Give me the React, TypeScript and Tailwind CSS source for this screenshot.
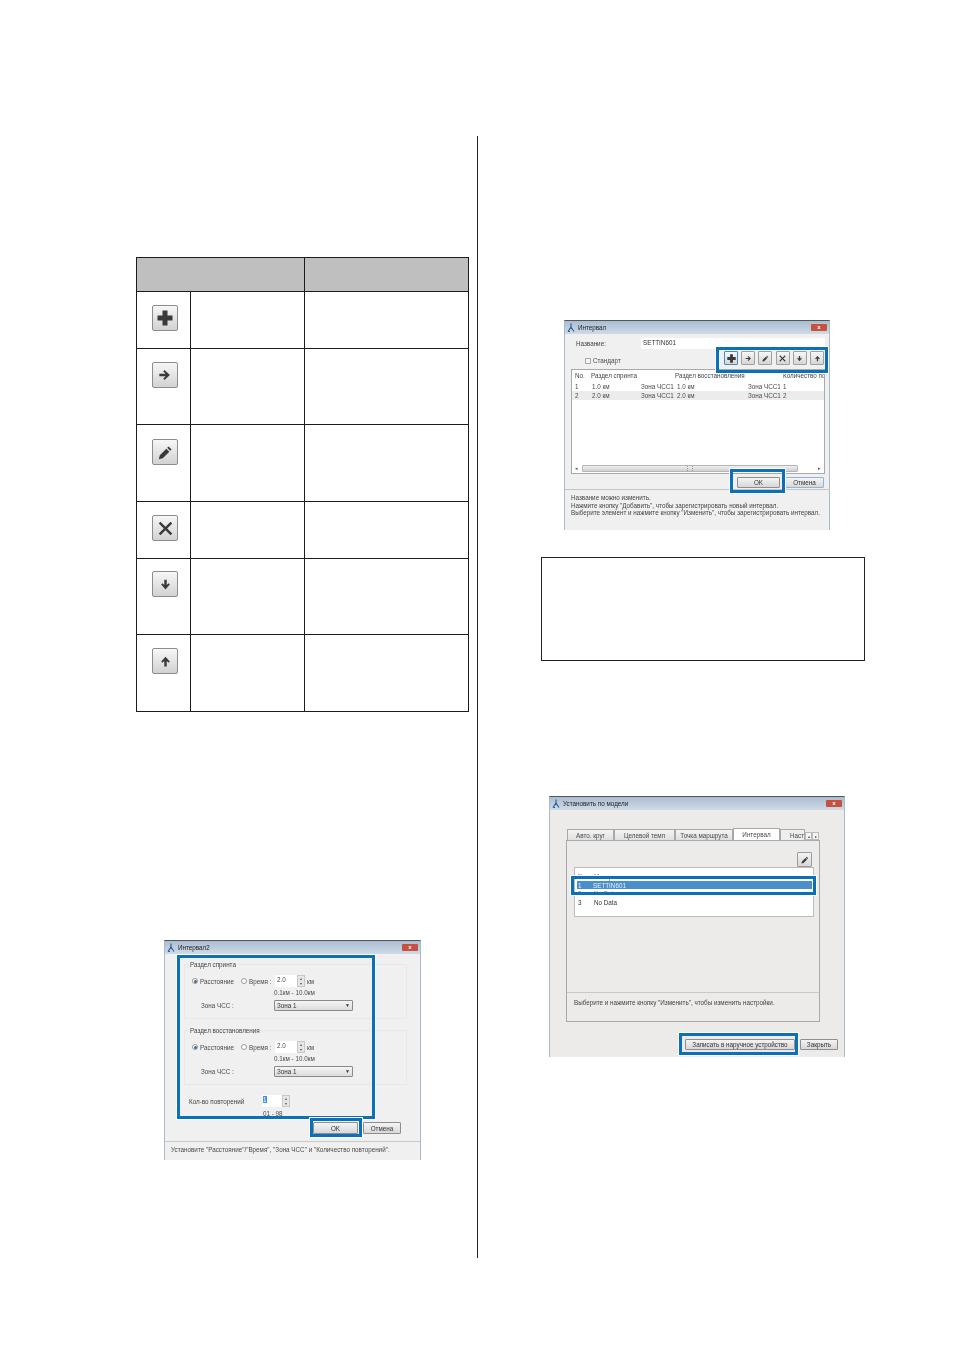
import React from 'react';

const cellLine = 'border-[#1c1c1c]';

type IconKind = 'plus' | 'right' | 'pencil' | 'x' | 'down' | 'up';

const ToolGlyph = ({ kind, size }: { kind: IconKind; size: number }) => (
  <svg width={size} height={size} viewBox="0 0 16 16" fill="#3a3a3a" stroke="none">
    {kind === 'plus' && <path d="M5.5 0.5h5v5h5v5h-5v5h-5v-5h-5v-5h5z" />}
    {kind === 'right' && <path d="M1.5 6.6h7.2L6 3.9l1.4-1.5L13.6 8l-6.2 5.6L6 12.1l2.7-2.7H1.5z" />}
    {kind === 'pencil' && <path d="M11.3 1.5l3.2 3.2-1.5 1.5-3.2-3.2zM8.9 3.9l3.2 3.2-7 7-4.2 1 1-4.2z" />}
    {kind === 'x' && <path d="M2.6 0.8L8 6.2l5.4-5.4 1.8 1.8L9.8 8l5.4 5.4-1.8 1.8L8 9.8l-5.4 5.4-1.8-1.8L6.2 8 .8 2.6z" />}
    {kind === 'down' && <path d="M6.5 2h3v6.6l2.2-2.2 1.6 1.6L8 14 2.7 8l1.6-1.6 2.2 2.2z" />}
    {kind === 'up' && <path d="M6.5 14h3V7.4l2.2 2.2 1.6-1.6L8 2 2.7 8l1.6 1.6 2.2-2.2z" />}
  </svg>
);

const rows: { kind: IconKind; h: string; pt: string; glyph: number }[] = [
  { kind: 'plus', h: 'h-[57px]', pt: 'pt-[13px]', glyph: 16 },
  { kind: 'right', h: 'h-[76px]', pt: 'pt-[13px]', glyph: 14 },
  { kind: 'pencil', h: 'h-[77px]', pt: 'pt-[14px]', glyph: 15 },
  { kind: 'x', h: 'h-[57px]', pt: 'pt-[13px]', glyph: 15 },
  { kind: 'down', h: 'h-[76px]', pt: 'pt-[12px]', glyph: 13 },
  { kind: 'up', h: 'h-[76px]', pt: 'pt-[13px]', glyph: 13 },
];

const IconTable = () => (
  <div className={`w-[333px] border-l border-r border-b ${cellLine}`}>
    <div className={`flex h-[35px] border-t border-b ${cellLine} bg-[#bfbfbf]`}>
      <div className={`w-[168px] border-r ${cellLine}`} />
    </div>
    {rows.map((r, i) => (
      <div key={r.kind} className={`flex ${r.h} ${i < rows.length - 1 ? `border-b ${cellLine}` : ''}`}>
        <div className={`w-[54px] border-r ${cellLine} ${r.pt} pl-[15px]`}>
          <div className="w-[26px] h-[26px] flex items-center justify-center rounded-[2px] border border-[#8d8d8d] bg-gradient-to-b from-[#f7f7f7] to-[#d2d2d2]">
            <ToolGlyph kind={r.kind} size={r.glyph} />
          </div>
        </div>
        <div className={`w-[114px] border-r ${cellLine}`} />
      </div>
    ))}
  </div>
);

const Win = ({ title, className, children }: { title: string; className: string; children: React.ReactNode }) => (
  <div className={`relative flex flex-col overflow-hidden border-t border-[#555] border-x border-x-[#a8bacb] font-['Liberation_Sans',sans-serif] text-[6.3px] leading-[9px] whitespace-nowrap text-[#4a4a4a] blur-[0.4px] ${className}`}>
    <div className="flex items-center h-[13px] shrink-0 pl-[2px] pr-[2px] bg-gradient-to-b from-[#a9bdd2] to-[#cfdbe6]">
      <svg width="8" height="9" viewBox="0 0 8 9" fill="none" stroke="#2f5f9e" strokeWidth="1.2">
        <path d="M4 0.5V4L1 8.5M4 4l3 4.5M1 8.5h2" />
      </svg>
      <span className="ml-[3px] text-[#222]">{title}</span>
      <div className="ml-auto w-[16px] h-[7px] rounded-[1px] bg-[#c8503f] flex items-center justify-center text-white text-[6px] leading-[7px] font-bold">x</div>
    </div>
    {children}
  </div>
);

// синяя рамка поверх окна
const Highlight = ({ className }: { className: string }) => (
  <div className={`absolute border-[3px] border-[#0b70b5] ring-1 ring-white ${className}`} />
);

const Radio = ({ on }: { on?: boolean }) => (
  <span className="flex items-center justify-center w-[6px] h-[6px] rounded-full border border-[#9a9a9a] bg-white shrink-0">
    {on && <span className="w-[3px] h-[3px] rounded-full bg-[#3f6d99]" />}
  </span>
);

const Spinner = () => (
  <div className="flex flex-col w-[8px] h-[12px] border border-[#c8c8c8] bg-[#e6e6e6] text-[4px] leading-[5px] text-center text-[#555]">
    <span className="flex-1">▴</span>
    <span className="flex-1">▾</span>
  </div>
);

const Btn = ({ label, className }: { label: string; className: string }) => (
  <div className={`flex items-center justify-center rounded-[1px] border border-[#8f8f8f] bg-gradient-to-b from-[#f4f4f4] to-[#d8d8d8] ${className}`}>{label}</div>
);

const SprintGroup = ({ title, className }: { title: string; className: string }) => (
  <div className={`ml-[19px] w-[223px] h-[55px] border border-[#e8e8e8] pl-[7px] ${className}`}>
    <div className="-mt-[5px] -ml-[3px] h-[9px] w-fit px-[1px] bg-[#f0f0f0] text-[#444]">{title}</div>
    <div className="flex items-center h-[12px] mt-[6px]">
      <Radio on />
      <span className="ml-[2px] w-[41px]">Расстояние</span>
      <Radio />
      <span className="ml-[2px] w-[26px]">Время :</span>
      <div className="w-[22px] h-[12px] bg-white pl-[2px] leading-[10px]">2.0</div>
      <Spinner />
      <span className="ml-[2px]">км</span>
    </div>
    <div className="ml-[82px] mt-[1px]">0.1км - 10.0км</div>
    <div className="flex items-center mt-[3px]">
      <span className="ml-[9px] w-[73px]">Зона ЧСС :</span>
      <div className="flex items-center justify-between w-[79px] h-[11px] px-[2px] border border-[#8a8a8a] rounded-[1px] bg-gradient-to-b from-[#f5f5f5] to-[#dcdcdc] text-[#333]">
        <span>Зона 1</span>
        <span className="text-[5px]">▼</span>
      </div>
    </div>
  </div>
);

const RepeatDialog = () => (
  <Win title="Интервал2" className="ml-[28px] mt-[228px] w-[257px] h-[220px] bg-[#f0f0f0]">
    <SprintGroup title="Раздел спринта" className="mt-[10px]" />
    <SprintGroup title="Раздел восстановления" className="mt-[11px]" />
    <div className="flex items-center h-[12px] mt-[10px] ml-[24px]">
      <span className="w-[73px] text-[#444]">Кол-во повторений</span>
      <div className="w-[20px] h-[12px] bg-white pl-[1px]">
        <span className="bg-[#3d8fd9] text-white">1</span>
      </div>
      <Spinner />
    </div>
    <div className="ml-[98px] mt-[2px]">01 - 98</div>
    <div className="flex mt-[4px] ml-[148px] gap-[5px] text-[#333]">
      <Btn label="OK" className="w-[45px] h-[12px] border-[#5f9fd0]" />
      <Btn label="Отмена" className="w-[38px] h-[12px]" />
    </div>
    <div className="mt-[7px] flex-1 border-t border-[#c9c9c9] pl-[6px] pt-[3px] bg-[#f0f0f0]">
      Установите "Расстояние"/"Время", "Зона ЧСС" и "Количество повторений".
    </div>
    <Highlight className="left-[12px] top-[14px] w-[198px] h-[164px]" />
    <Highlight className="left-[145px] top-[177px] w-[52px] h-[19px]" />
  </Win>
);

const toolKinds: IconKind[] = ['plus', 'right', 'pencil', 'x', 'down', 'up'];

const intervalRows = [
  { no: '1', a: '1.0 км', b: 'Зона ЧСС1', c: '1.0 км', d: 'Зона ЧСС1', e: '1', bg: '' },
  { no: '2', a: '2.0 км', b: 'Зона ЧСС1', c: '2.0 км', d: 'Зона ЧСС1', e: '2', bg: 'bg-[#ececec]' },
];

const IntervalDialog = () => (
  <Win title="Интервал" className="ml-[86px] mt-[184px] w-[266px] h-[210px] bg-[#f0f0f0]">
    <div className="flex items-center h-[11px] mt-[4px] pl-[11px]">
      <span className="w-[65px] text-[#444]">Название:</span>
      <div className="w-[184px] h-[11px] bg-white pl-[2px] text-[#333]">SETTIN601</div>
    </div>
    <div className="flex h-[20px]">
      <div className="flex items-center h-[11px] mt-[6px] ml-[20px]">
        <span className="w-[6px] h-[6px] border border-[#aaa] bg-[#f4f4f4]" />
        <span className="ml-[2px]">Стандарт</span>
      </div>
      <div className="flex ml-auto mr-[5px] mt-[2px] gap-[3.2px]">
        {toolKinds.map((k, i) => (
          <div key={k} className={`flex items-center justify-center w-[14px] h-[14px] rounded-[1px] border bg-gradient-to-b from-[#f7f7f7] to-[#d6d6d6] ${i === 0 ? 'border-[#3f8ccb]' : 'border-[#a0a0a0]'}`}>
            <ToolGlyph kind={k} size={i === 0 ? 9 : 7} />
          </div>
        ))}
      </div>
    </div>
    <div className="flex flex-col ml-[6px] w-[254px] h-[105px] overflow-hidden border border-[#a9a9a9] bg-white">
      <div className="flex items-center h-[11px] pl-[3px] text-[#444]">
        <span className="w-[16px] shrink-0">No.</span>
        <span className="w-[84px] shrink-0">Раздел спринта</span>
        <span className="w-[108px] shrink-0">Раздел восстановления</span>
        <span className="shrink-0">Количество повторений</span>
      </div>
      <div className="mt-[1px]">
        {intervalRows.map((r) => (
          <div key={r.no} className={`flex items-center h-[9px] pl-[3px] ${r.bg}`}>
            <span className="w-[17px]">{r.no}</span>
            <span className="w-[49px]">{r.a}</span>
            <span className="w-[36px]">{r.b}</span>
            <span className="w-[71px]">{r.c}</span>
            <span className="w-[35px]">{r.d}</span>
            <span>{r.e}</span>
          </div>
        ))}
      </div>
      <div className="mt-auto flex items-center h-[8px] px-[3px] mb-[1px] text-[5px] text-[#555]">
        <span>◂</span>
        <div className="ml-[4px] w-[216px] h-[7px] rounded-[1px] border border-[#b5b5b5] bg-gradient-to-b from-[#f0f0f0] to-[#d0d0d0] text-center leading-[5px]">⋮⋮</div>
        <span className="ml-auto">▸</span>
      </div>
    </div>
    <div className="flex justify-end gap-[5px] mt-[3px] mr-[5px] text-[#333]">
      <Btn label="OK" className="w-[43px] h-[11px]" />
      <Btn label="Отмена" className="w-[39px] h-[11px] border-[#8fb6d6]" />
    </div>
    <div className="mt-[1px] flex-1 border-t border-[#c4c4c4] pl-[6px] pt-[4px] leading-[7.5px] text-[#444]">
      <div>Название можно изменить.</div>
      <div>Нажмите кнопку "Добавить", чтобы зарегистрировать новый интервал.</div>
      <div>Выберите элемент и нажмите кнопку "Изменить", чтобы зарегистрировать интервал.</div>
    </div>
    <Highlight className="left-[151px] top-[26px] w-[112px] h-[26px]" />
    <Highlight className="left-[165px] top-[148px] w-[55px] h-[24px]" />
  </Win>
);

const tabs = [
  { label: 'Авто. круг', w: 'w-[47px]', active: false },
  { label: 'Целевой темп', w: 'w-[61px]', active: false },
  { label: 'Точка маршрута', w: 'w-[58px]', active: false },
  { label: 'Интервал', w: 'w-[47px]', active: true },
];

const DeviceDialog = () => (
  <Win title="Установить по модели" className="ml-[71px] mt-[135px] w-[296px] h-[261px] bg-[#ecebe9]">
    <div className="flex items-end ml-[17px] mt-[19px] h-[11px]">
      {tabs.map((t) => (
        <div key={t.label} className={`flex items-center justify-center ${t.w} border border-b-0 border-[#a9a9a9] ${t.active ? 'h-[12px] bg-white' : 'h-[11px] bg-gradient-to-b from-[#f4f4f4] to-[#e0e0e0]'}`}>
          {t.label}
        </div>
      ))}
      <div className="flex items-center w-[25px] h-[11px] pl-[9px] overflow-hidden border border-b-0 border-[#a9a9a9] bg-[#eeeeee]">Наст</div>
      <div className="flex items-center justify-center w-[7px] h-[8px] border border-[#bbb] bg-[#f4f4f4] text-[4px]">▴</div>
      <div className="flex items-center justify-center w-[7px] h-[8px] border border-[#bbb] bg-[#f4f4f4] text-[4px]">▸</div>
    </div>
    <div className="flex flex-col ml-[16px] w-[254px] h-[182px] border border-[#a9a9a9] bg-[#ecebe9]">
      <div className="flex justify-end mt-[11px] mr-[7px]">
        <div className="flex items-center justify-center w-[15px] h-[15px] rounded-[1px] border border-[#9b9b9b] bg-gradient-to-b from-[#f4f4f4] to-[#d8d8d8]">
          <ToolGlyph kind="pencil" size={8} />
        </div>
      </div>
      <div className="ml-[7px] mr-[5px] h-[50px] border border-[#bdbdbd] bg-white">
        <div className="flex items-center h-[13px] pl-[3px] pt-[4px] text-[#666]">
          <span className="w-[16px]">No.</span>
          <span>Материал</span>
        </div>
        <div className="flex items-center ml-[2px] mr-[1px] h-[8px] pl-[1px] bg-[#4a8fcb] text-[#e8f1f9]">
          <span className="w-[15px]">1</span>
          <span>SETTIN601</span>
        </div>
        <div className="flex items-center h-[9px] pl-[3px] text-[#888]">
          <span className="w-[16px]">2</span>
          <span>No Data</span>
        </div>
        <div className="flex items-center h-[9px] pl-[3px] text-[#333]">
          <span className="w-[16px]">3</span>
          <span>No Data</span>
        </div>
      </div>
      <div className="mt-[75px] ml-0 flex-1 border-t border-[#c8c8c8] pl-[7px] pt-[5px] text-[#444]">
        Выберите и нажмите кнопку "Изменить", чтобы изменить настройки.
      </div>
    </div>
    <div className="flex justify-end gap-[5px] mt-[17px] mr-[6px] text-[#333]">
      <Btn label="Записать в наручное устройство" className="w-[110px] h-[11px]" />
      <Btn label="Закрыть" className="w-[38px] h-[11px] border-[#5d9fd6]" />
    </div>
    <Highlight className="left-[21px] top-[79px] w-[245px] h-[19px]" />
    <Highlight className="left-[129px] top-[236px] w-[119px] h-[22px]" />
  </Win>
);

export default function App() {
  return (
    <div className="flex w-[954px] h-[1350px] pt-[136px] bg-white overflow-hidden">
      <div className="ml-[136px] w-[333px] shrink-0 pt-[121px]">
        <IconTable />
        <RepeatDialog />
      </div>
      <div className="ml-[8px] w-px h-[1122px] shrink-0 bg-[#222]" />
      <div className="flex-1">
        <IntervalDialog />
        <div className="ml-[63px] mt-[27px] w-[324px] h-[104px] border border-[#222]" />
        <DeviceDialog />
      </div>
    </div>
  );
}
